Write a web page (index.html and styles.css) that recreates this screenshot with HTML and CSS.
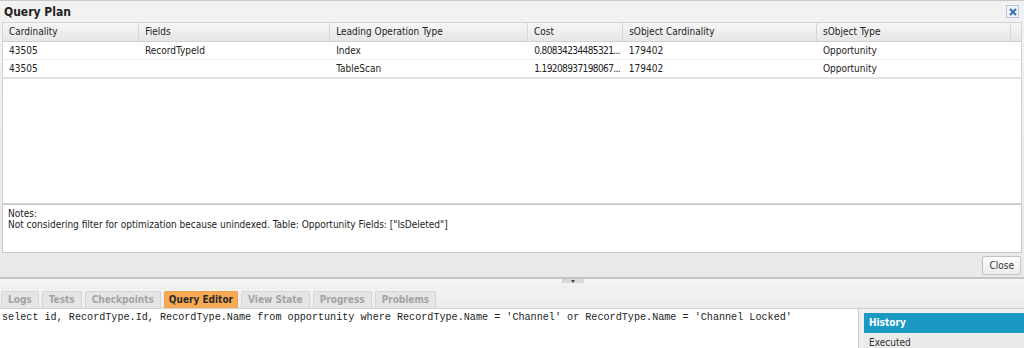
FILE: index.html
```html
<!DOCTYPE html>
<html lang="en">
<head>
    <meta charset="UTF-8">
    <title>Query Plan</title>
    <link rel="stylesheet" href="styles.css">
</head>
<body>
    <div class="plan-window">
        <div class="plan-title">
            <span>Query Plan</span>
            <span class="close-x">
                <svg width="10" height="10" viewBox="0 0 10 10"><path d="M2 2 L8 8 M8 2 L2 8" stroke="#3a6fb0" stroke-width="2"/></svg>
            </span>
        </div>
        <div class="plan-grid">
            <div class="grid-row grid-head">
                <div class="c1">Cardinality</div>
                <div class="c2">Fields</div>
                <div class="c3">Leading Operation Type</div>
                <div class="c4">Cost</div>
                <div class="c5">sObject Cardinality</div>
                <div class="c6">sObject Type</div>
                <div class="c7"></div>
            </div>
            <div class="grid-row">
                <div class="c1">43505</div>
                <div class="c2">RecordTypeId</div>
                <div class="c3">Index</div>
                <div class="c4 num">0.80834234485321...</div>
                <div class="c5">179402</div>
                <div class="c6">Opportunity</div>
                <div class="c7"></div>
            </div>
            <div class="grid-row last">
                <div class="c1">43505</div>
                <div class="c2"></div>
                <div class="c3">TableScan</div>
                <div class="c4 num">1.19208937198067...</div>
                <div class="c5">179402</div>
                <div class="c6">Opportunity</div>
                <div class="c7"></div>
            </div>
        </div>
        <div class="plan-notes">
            Notes:<br>
            Not considering filter for optimization because unindexed. Table: Opportunity Fields: ["IsDeleted"]
        </div>
        <div class="plan-footer">
            <button class="btn">Close</button>
        </div>
    </div>

    <div class="splitter"><span class="split-knob"></span></div>

    <div class="tabs">
        <div class="tab">Logs</div>
        <div class="tab">Tests</div>
        <div class="tab">Checkpoints</div>
        <div class="tab active">Query Editor</div>
        <div class="tab">View State</div>
        <div class="tab">Progress</div>
        <div class="tab">Problems</div>
    </div>

    <div class="editor-area">
        <div class="editor">select id, RecordType.Id, RecordType.Name from opportunity where RecordType.Name = 'Channel' or RecordType.Name = 'Channel Locked'</div>
        <div class="history">
            <div class="history-head">History</div>
            <div class="history-row">Executed</div>
        </div>
    </div>
</body>
</html>
```

FILE: styles.css
```css
body {
    margin: 0;
    background: #efefef;
    font-family: "DejaVu Sans Condensed", "DejaVu Sans", sans-serif;
    font-size: 10px;
    color: #222;
    width: 1024px;
    height: 348px;
    overflow: hidden;
}
.plan-window {
    height: 276px;
    border-top: 1px solid #c9c9c9;
    border-bottom: 2px solid #c4c4c4;
    background: linear-gradient(#f2f2f2, #e9e9e9);
    display: flex;
    flex-direction: column;
    padding: 0 2px;
}
.plan-title {
    height: 21px;
    display: flex;
    align-items: center;
    justify-content: space-between;
    font-weight: bold;
    font-size: 12px;
    color: #1e1e1e;
    padding-left: 2px;
    padding-right: 3px;
}
.close-x {
    width: 11px;
    height: 11px;
    border: 1px solid #b8c6d8;
    background: #eef3f9;
    display: flex;
    align-items: center;
    justify-content: center;
}
.plan-grid {
    height: 180px;
    background: #fff;
    border: 1px solid #d4d4d4;
}
.grid-row {
    display: flex;
    height: 17px;
    border-bottom: 1px solid #ededed;
}
.grid-row.last {
    border-bottom: 2px solid #e2e2e2;
}
.grid-row > div {
    padding-left: 6px;
    padding-right: 4px;
    line-height: 17px;
    white-space: nowrap;
    overflow: hidden;
}
.grid-row > .num {
    letter-spacing: -0.6px;
    padding-right: 0;
    width: 90px;
}
.grid-head {
    height: 18px;
    background: linear-gradient(#f6f6f6, #e6e6e6);
    border-bottom: 1px solid #d0d0d0;
}
.grid-head > div {
    line-height: 18px;
    border-right: 1px solid #d6d6d6;
}
.grid-head .c7 { border-right: none; }
.c1 { width: 128px; }
.c2 { width: 184px; }
.c3 { width: 191px; }
.c4 { width: 86px; }
.c5 { width: 187px; }
.c6 { width: 187px; }
.c7 { flex: 1; }
.plan-notes {
    height: 40px;
    background: #fff;
    border: 1px solid #c8c8c8;
    padding: 3px 5px 4px;
    line-height: 11px;
}
.plan-footer {
    flex: 1;
    display: flex;
    align-items: center;
    justify-content: flex-end;
    padding-right: 1px;
}
.btn {
    font-family: "DejaVu Sans Condensed", "DejaVu Sans", sans-serif;
    font-size: 10px;
    color: #333;
    height: 19px;
    padding: 0 6px;
    border: 1px solid #c2c2c2;
    border-radius: 2px;
    background: linear-gradient(#fdfdfd, #ececec);
}
.splitter {
    height: 10px;
    display: flex;
    justify-content: center;
    background: linear-gradient(#f7f7f7, #ededed);
}
.split-knob {
    margin-left: 122px;
    width: 22px;
    height: 4px;
    background: #d8d8d8;
    position: relative;
}
.split-knob::after {
    content: "";
    position: absolute;
    left: 9px;
    top: 1px;
    border-left: 2px solid transparent;
    border-right: 2px solid transparent;
    border-top: 3px solid #444;
}
.tabs {
    height: 19px;
    display: flex;
    gap: 3px;
    align-items: flex-end;
    padding-left: 1px;
    background: linear-gradient(#f3f3f3, #ececec);
    border-bottom: 1px solid #d0d0d0;
}
.tab {
    height: 16px;
    line-height: 16px;
    padding: 0 6px;
    font-weight: bold;
    color: #a3a3a3;
    background: #e5e5e5;
    border: 1px solid #d6d6d6;
    border-bottom: none;
    border-radius: 2px 2px 0 0;
}
.tab.active {
    padding: 0 4px;
    background: #f7a953;
    border-color: #f0a04a;
    color: #2a2a2a;
}
.editor-area {
    display: flex;
    height: 41px;
}
.editor {
    width: 856px;
    background: #fff;
    border-right: 1px solid #c8c8c8;
    font-family: "Liberation Mono", monospace;
    font-size: 10.15px;
    color: #222;
    padding: 3px 0 0 2px;
    white-space: nowrap;
}
.history {
    flex: 1;
    margin-left: 5px;
    margin-top: 4px;
    background: #e9e9e9;
}
.history-head {
    height: 20px;
    line-height: 20px;
    background: #1a99c4;
    color: #fff;
    font-weight: bold;
    padding-left: 5px;
    border-bottom: 1px solid #f4f4f4;
}
.history-row {
    line-height: 18px;
    padding-left: 5px;
    color: #333;
}
```
